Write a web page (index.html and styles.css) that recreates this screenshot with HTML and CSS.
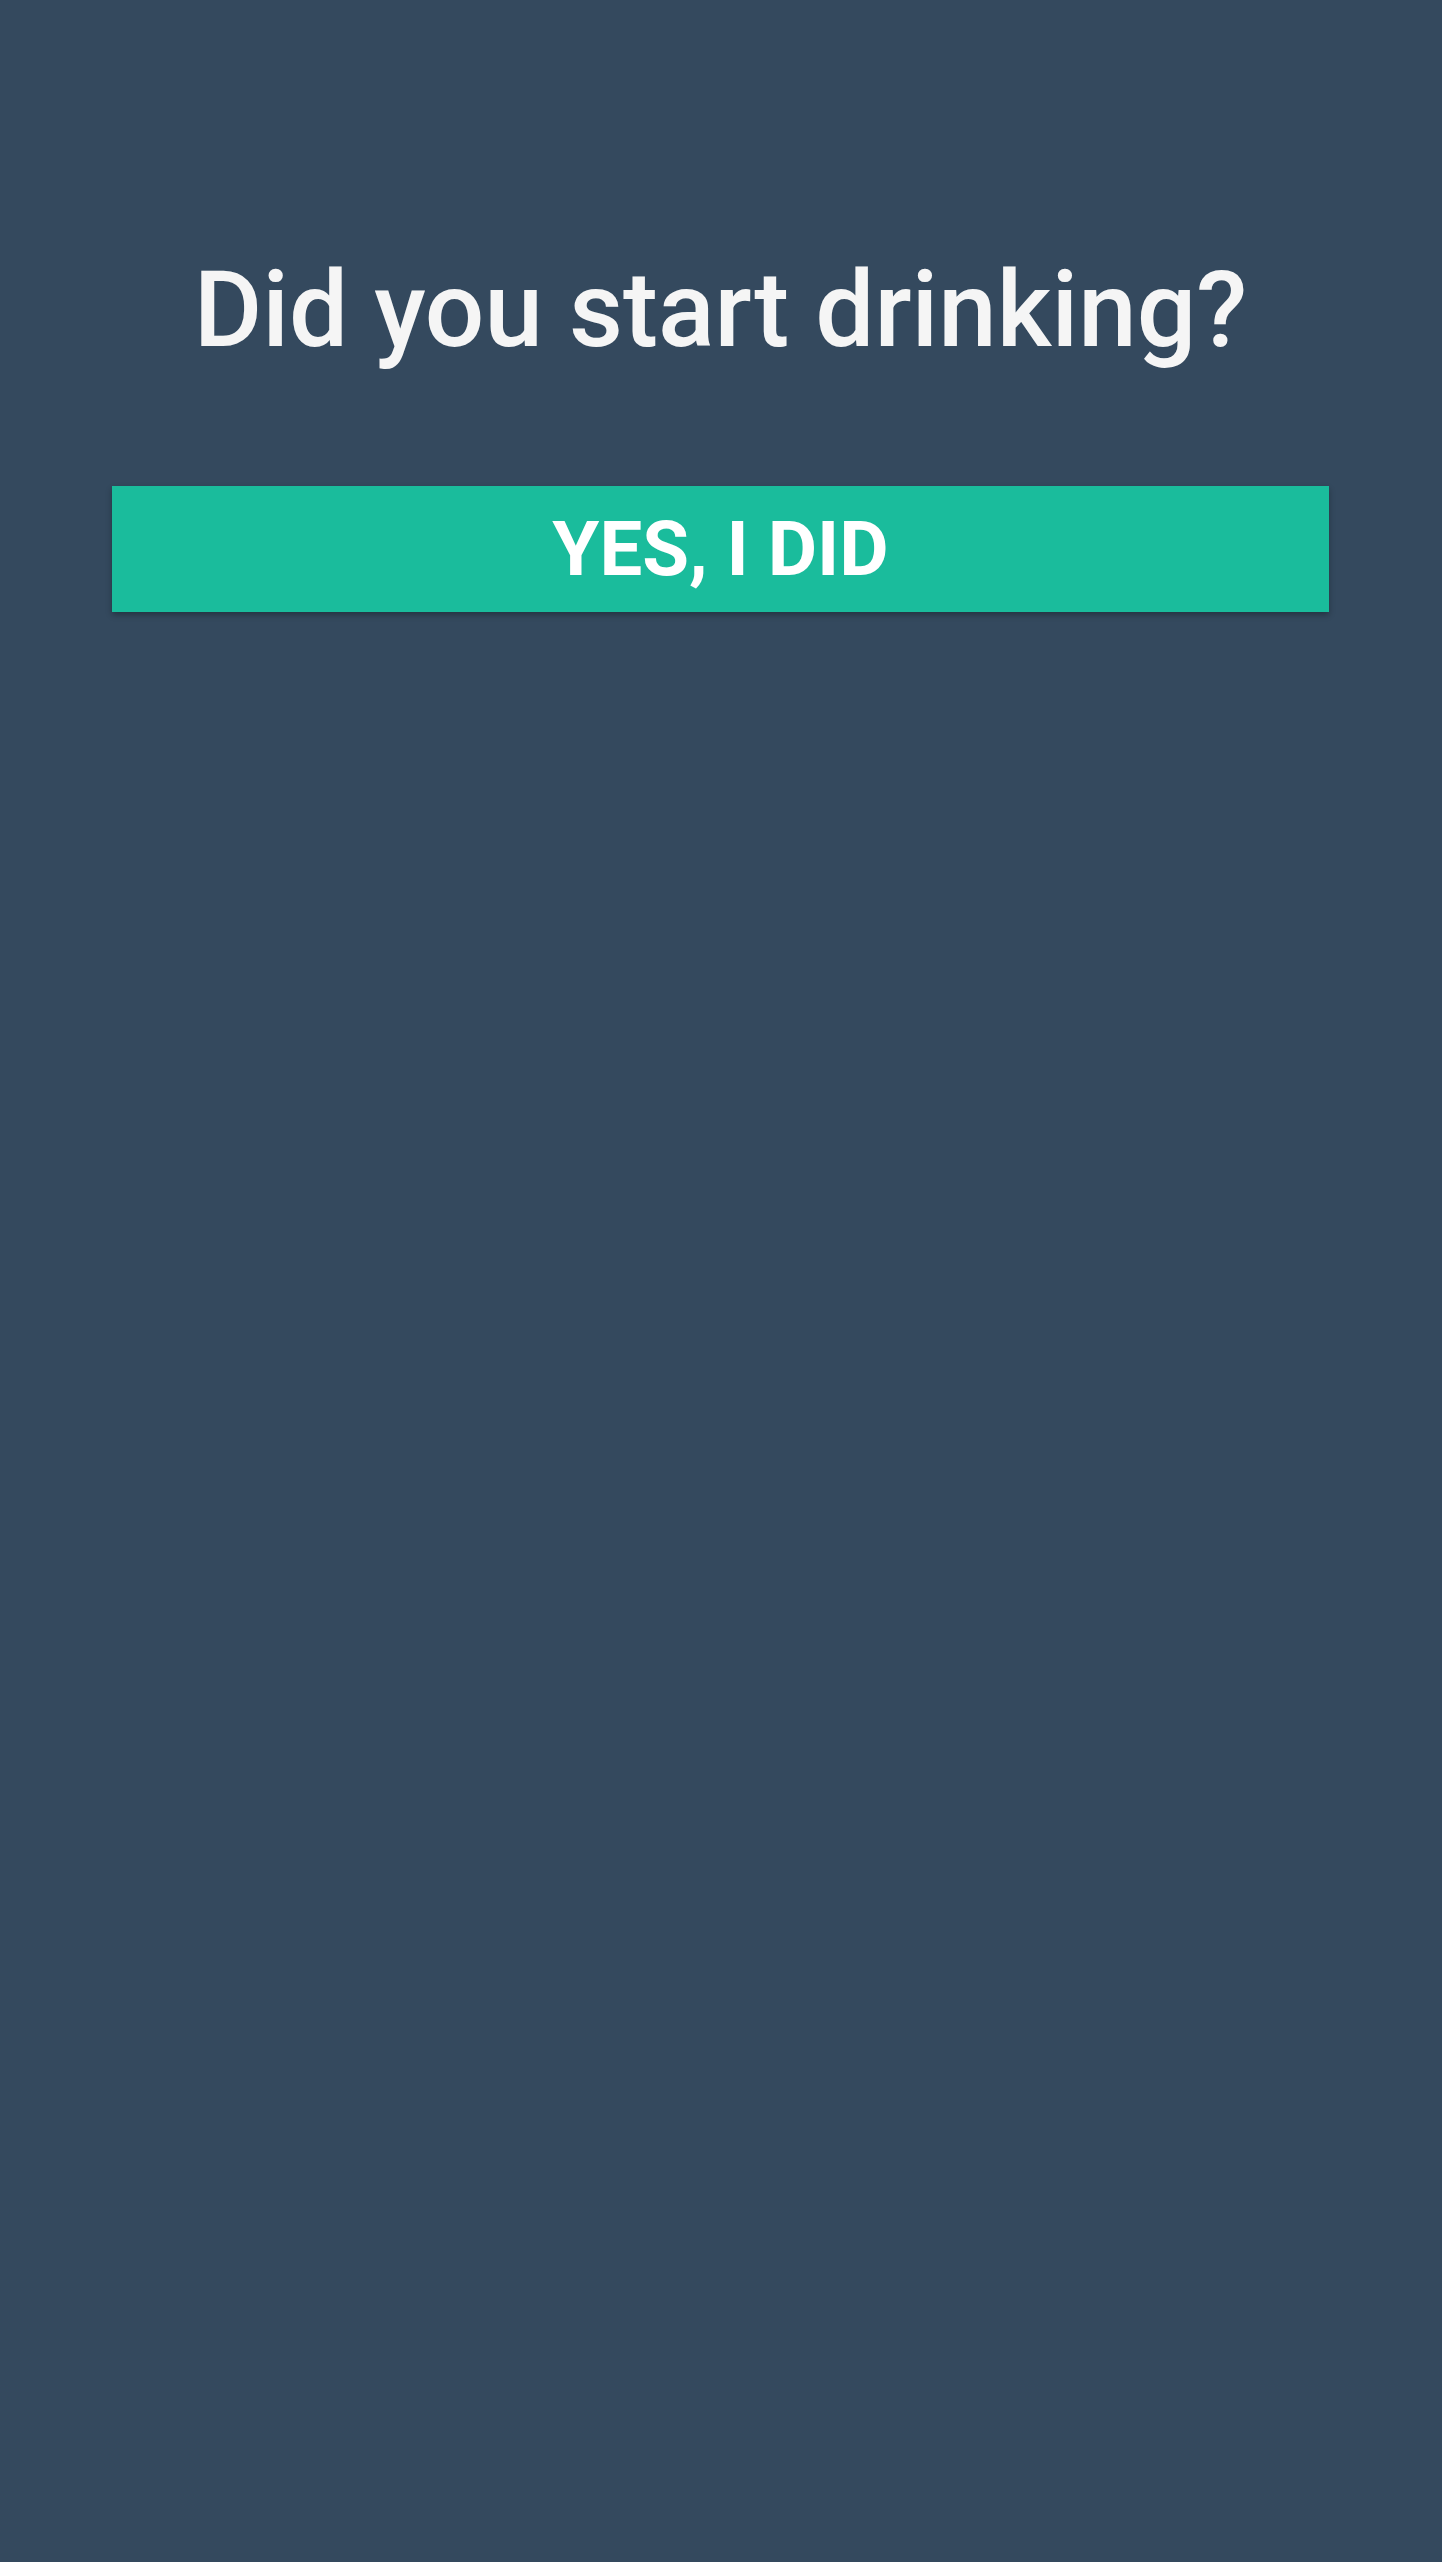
FILE: index.html
```html
<!DOCTYPE html>
<html>
<head>
<meta charset="utf-8">
<link rel="stylesheet" href="styles.css">
</head>
<body>
<main class="screen">
  <h1 class="question">Did you start drinking?</h1>
  <button class="answer">YES, I DID</button>
</main>
</body>
</html>
```
FILE: styles.css
```css
html, body {
  margin: 0;
  padding: 0;
  background: #34495e;
}
.screen {
  min-height: 2562px;
  box-sizing: border-box;
  padding: 0 113px 0 112px;
  display: flex;
  flex-direction: column;
  align-items: stretch;
  font-family: Roboto, "Liberation Sans", sans-serif;
}
.question {
  margin: 249px 0 0;
  height: 237px;
  font-size: 105px;
  font-weight: 500;
  line-height: 124px;
  color: #f5f5f5;
  text-align: center;
}
.answer {
  height: 126px;
  border: none;
  margin: 0;
  padding: 0;
  background: #1abc9c;
  color: #ffffff;
  font-family: Roboto, "Liberation Sans", sans-serif;
  font-size: 76px;
  font-weight: 700;
  box-shadow: 0 3px 6px rgba(0, 0, 0, 0.3);
}
```
